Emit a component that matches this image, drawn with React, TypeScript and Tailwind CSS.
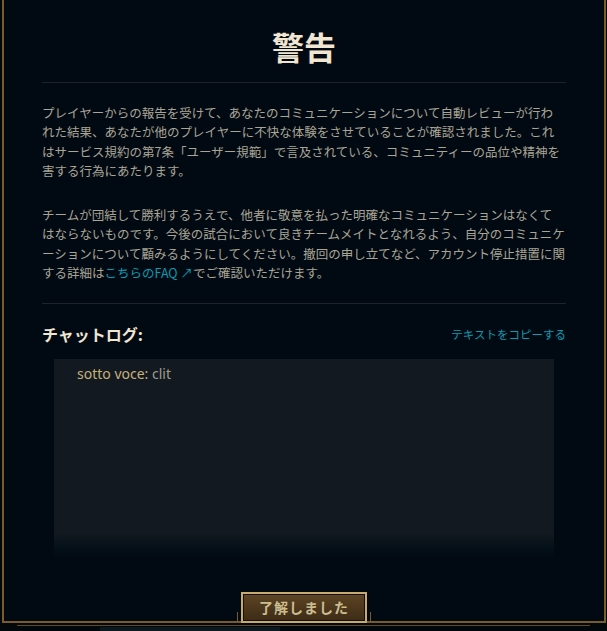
import React from 'react';

const jp = { fontFamily: '"Noto Sans CJK JP", "Noto Sans", sans-serif' };

const ChatLine: React.FC<{ name: string; text: string }> = ({ name, text }) => (
  <div className="text-[14px] leading-[20px]" style={{ fontFamily: '"Noto Sans", "Noto Sans CJK JP", sans-serif' }}>
    <span className="text-[#c8b07a]">{name}: </span>
    <span className="text-[#a09b8c]">{text}</span>
  </div>
);

const App: React.FC = () => {
  return (
    <div className="w-[607px] h-[631px] bg-[#03080c] overflow-hidden" style={jp}>
      {/* モーダル本体 */}
      <div className="relative ml-[2px] mr-[1px] h-[623px] bg-[#010a13] border-x-2 border-b-2 border-[#7a5c29] px-[38px] flex flex-col">
        <h1 className="pt-[26px] text-center text-[32px] leading-[40px] font-bold text-[#f0e6d2]">警告</h1>
        <div className="mt-[16px] h-px bg-[#1e2328]" />

        <div className="text-[12.5px] leading-[19.3px] text-[#aaa595] whitespace-nowrap">
          <p className="mt-[20px]">
            プレイヤーからの報告を受けて、あなたのコミュニケーションについて自動レビューが行わ<br />
            れた結果、あなたが他のプレイヤーに不快な体験をさせていることが確認されました。これ<br />
            はサービス規約の第7条「ユーザー規範」で言及されている、コミュニティーの品位や精神を<br />
            害する行為にあたります。
          </p>
          <p className="mt-[25px]">
            チームが団結して勝利するうえで、他者に敬意を払った明確なコミュニケーションはなくて<br />
            はならないものです。今後の試合において良きチームメイトとなれるよう、自分のコミュニケ<br />
            ーションについて顧みるようにしてください。撤回の申し立てなど、アカウント停止措置に関<br />
            する詳細は<a className="text-[#0a9bb0]">こちらのFAQ ↗</a>でご確認いただけます。
          </p>
        </div>

        <div className="mt-[21px] h-px bg-[#1e2328]" />

        {/* チャットログ */}
        <div className="mt-[18px] flex items-center justify-between">
          <h2 className="text-[16px] leading-[24px] font-bold text-[#f0e6d2]">チャットログ:</h2>
          <button className="text-[11.5px] text-[#0a9bb0]">テキストをコピーする</button>
        </div>
        <div className="mt-[13px] mx-[12px] h-[198px] pl-[23px] pt-[5px] bg-linear-to-b from-[#121920] from-[88%] to-[#010a13]">
          <ChatLine name="sotto voce" text="clit" />
        </div>

        {/* 了解ボタン */}
        <div className="absolute left-1/2 -translate-x-1/2 bottom-[-2px] w-[134px] h-[31px] flex items-end justify-center">
          <div className="absolute left-0 bottom-[2px] w-px h-[9px] bg-[#7a5c29]" />
          <div className="absolute right-0 bottom-[2px] w-px h-[9px] bg-[#7a5c29]" />
          <div className="w-[126px] h-[31px] border-2 border-[#c8aa6e] bg-[#14110d] p-px">
            <div className="h-full flex items-center justify-center bg-linear-to-b from-[#5c4423] to-[#3e2c17]">
              <span className="text-[14px] font-semibold text-[#cdbe91] tracking-[1px]">了解しました</span>
            </div>
          </div>
        </div>
      </div>

      <div className="mt-[2px] mx-[17px] h-px bg-[#5e4a27]" />
      <div className="mt-px ml-[100px] w-[180px] h-[5px] bg-[#0c1a1f]" />
    </div>
  );
};

export default App;
